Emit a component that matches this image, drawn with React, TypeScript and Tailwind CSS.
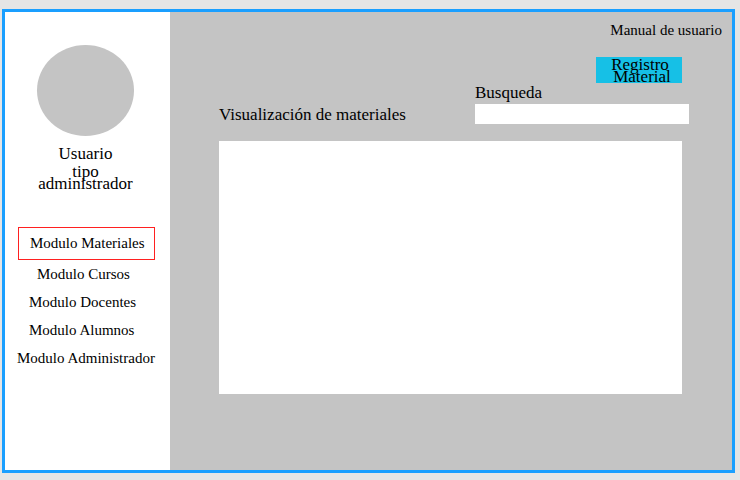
const modules = [
  { name: "Modulo Cursos", indent: "pl-5" },
  { name: "Modulo Docentes", indent: "pl-3" },
  { name: "Modulo Alumnos", indent: "pl-3" },
  { name: "Modulo Administrador", indent: "pl-0" },
];

function Sidebar() {
  return (
    <aside className="w-[165px] shrink-0 bg-white pt-[33px]">
      <div className="flex flex-col items-center pr-1 text-center text-[17px]">
        <div className="h-[91px] w-[97px] rounded-[50%] bg-[#c4c4c4]" />
        <p className="mt-2 leading-5">Usuario</p>
        <p className="mt-0.5 leading-3">
          tipo
          <br />
          administrador
        </p>
      </div>
      <nav className="mt-[37px] flex flex-col pl-3 text-[15px] whitespace-nowrap">
        <a
          href="#materiales"
          aria-current="page"
          className="mr-[15px] ml-px flex h-[33px] items-center border border-[#ff2020] pl-[11px]"
        >
          Modulo Materiales
        </a>
        {modules.map((m) => (
          <a key={m.name} href="#modulo" className={`flex h-7 items-center ${m.indent}`}>
            {m.name}
          </a>
        ))}
      </nav>
    </aside>
  );
}

export default function App() {
  return (
    <div className="flex min-h-screen bg-[#e5e5e5] pt-[9px] pr-[5px] pb-[7px] pl-[2px] font-['Liberation_Serif',serif] text-black">
      <div className="flex flex-1 border-3 border-[#1a9fff]">
        <Sidebar />
        <main className="flex min-w-0 flex-1 flex-col bg-[#c4c4c4] pt-2 pb-[76px] pl-[49px]">
          <a href="#manual" className="mr-[10px] self-end text-[15px] leading-5">
            Manual de usuario
          </a>
          <button
            type="button"
            className="mt-[17px] mr-[50px] flex h-[26px] w-[86px] flex-col items-center justify-end self-end bg-[#16c0e6] pl-1.5 text-[17px] leading-3"
          >
            <span className="pr-1">Registro</span>
            <span>Material</span>
          </button>
          <div className="mr-[43px] flex items-end justify-between text-[17px]">
            <h1 className="leading-[18px]">Visualización de materiales</h1>
            <div className="flex w-[214px] flex-col">
              <label htmlFor="busqueda" className="leading-5">
                Busqueda
              </label>
              <input id="busqueda" type="text" className="mt-px h-5 w-full bg-white px-2 outline-none" />
            </div>
          </div>
          <section aria-label="Materiales" className="mt-[17px] mr-[50px] flex-1 bg-white" />
        </main>
      </div>
    </div>
  );
}
